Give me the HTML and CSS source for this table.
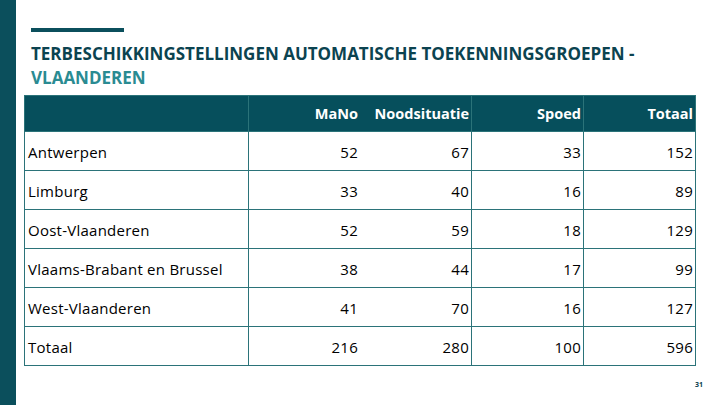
FILE: index.html
```html
<!DOCTYPE html>
<html lang="nl">
<head>
<meta charset="utf-8">
<link rel="stylesheet" href="styles.css">
</head>
<body>
<div class="slide">
  <div class="side-bar"></div>
  <main class="content">
    <div class="title-block">
      <div class="accent"></div>
      <h1 class="title">TERBESCHIKKINGSTELLINGEN AUTOMATISCHE TOEKENNINGSGROEPEN -<br><span class="title-sub">VLAANDEREN</span></h1>
    </div>
    <table class="data">
      <thead>
        <tr>
          <th class="name"></th>
          <th class="pair"><span class="c">MaNo</span><span class="c">Noodsituatie</span></th>
          <th class="num">Spoed</th>
          <th class="num">Totaal</th>
        </tr>
      </thead>
      <tbody>
        <tr><td class="name">Antwerpen</td><td class="pair"><span class="c">52</span><span class="c">67</span></td><td class="num">33</td><td class="num">152</td></tr>
        <tr><td class="name">Limburg</td><td class="pair"><span class="c">33</span><span class="c">40</span></td><td class="num">16</td><td class="num">89</td></tr>
        <tr><td class="name">Oost-Vlaanderen</td><td class="pair"><span class="c">52</span><span class="c">59</span></td><td class="num">18</td><td class="num">129</td></tr>
        <tr><td class="name">Vlaams-Brabant en Brussel</td><td class="pair"><span class="c">38</span><span class="c">44</span></td><td class="num">17</td><td class="num">99</td></tr>
        <tr><td class="name">West-Vlaanderen</td><td class="pair"><span class="c">41</span><span class="c">70</span></td><td class="num">16</td><td class="num">127</td></tr>
        <tr><td class="name">Totaal</td><td class="pair"><span class="c">216</span><span class="c">280</span></td><td class="num">100</td><td class="num">596</td></tr>
      </tbody>
    </table>
    <div class="page-no">31</div>
  </main>
</div>
</body>
</html>
```

FILE: styles.css
```css
html, body {
  margin: 0;
  padding: 0;
  background: #ffffff;
}
.slide {
  display: flex;
  width: 720px;
  height: 405px;
  overflow: hidden;
  font-family: "Open Sans", "Noto Sans", sans-serif;
}
.side-bar {
  width: 16px;
  flex: none;
  background: #0b4f5c;
}
.content {
  flex: 1;
  padding: 28px 0 0 8px;
  display: flex;
  flex-direction: column;
}
.title-block {
  padding-left: 7px;
}
.accent {
  width: 93px;
  height: 4px;
  background: #0b4f5c;
}
.title {
  margin: 10px 0 0 0;
  font-size: 17px;
  line-height: 24px;
  font-weight: 700;
  color: #0b4350;
}
.title-sub {
  color: #2a8b92;
}
.data {
  margin-top: 5px;
  border-collapse: collapse;
  width: 672px;
  font-size: 15px;
  color: #000;
}
.data th, .data td {
  border: 1px solid #2b7379;
  padding: 0 2px 0 3px;
}
.data th {
  background: #064f5c;
  color: #ffffff;
  height: 35px;
  font-weight: 700;
  font-size: 14.5px;
}
.data td {
  height: 36px;
  padding-top: 2px;
  letter-spacing: 0.25px;
}
.data .name {
  width: 218px;
  text-align: left;
}
.data .pair {
  width: 218px;
  padding: 0;
}
.data td.pair {
  padding-top: 2px;
}
.pair {
  white-space: nowrap;
}
.pair .c {
  display: inline-block;
  width: 109px;
  text-align: right;
  padding-right: 2px;
}
.data .num {
  width: 106px;
  text-align: right;
}
.page-no {
  align-self: flex-end;
  margin: 14px 17px 0 0;
  font-size: 7px;
  font-weight: 700;
  color: #0b4350;
}
```
